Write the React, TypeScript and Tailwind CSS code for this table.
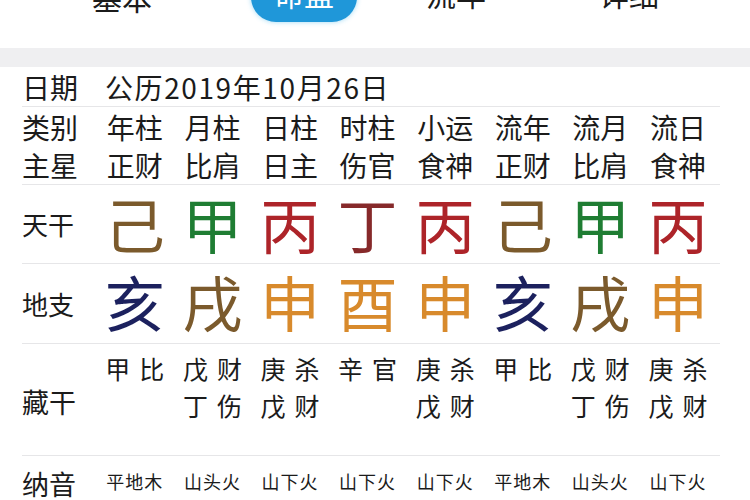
import React from "react";

const font = { fontFamily: '"Noto Sans CJK SC", "Noto Sans", sans-serif' };

const cols = ["年柱", "月柱", "日柱", "时柱", "小运", "流年", "流月", "流日"];
const stars = ["正财", "比肩", "日主", "伤官", "食神", "正财", "比肩", "食神"];
const gan: [string, string][] = [
  ["己", "#7b5a2c"],
  ["甲", "#1f7d33"],
  ["丙", "#ad2429"],
  ["丁", "#86292a"],
  ["丙", "#ad2429"],
  ["己", "#7b5a2c"],
  ["甲", "#1f7d33"],
  ["丙", "#ad2429"],
];
const zhi: [string, string][] = [
  ["亥", "#1c215e"],
  ["戌", "#7b5a2c"],
  ["申", "#d88a2c"],
  ["酉", "#d88a2c"],
  ["申", "#d88a2c"],
  ["亥", "#1c215e"],
  ["戌", "#7b5a2c"],
  ["申", "#d88a2c"],
];
const cang: string[][] = [
  ["甲比"],
  ["戊财", "丁伤"],
  ["庚杀", "戊财"],
  ["辛官"],
  ["庚杀", "戊财"],
  ["甲比"],
  ["戊财", "丁伤"],
  ["庚杀", "戊财"],
];
const nayin = ["平地木", "山头火", "山下火", "山下火", "山下火", "平地木", "山头火", "山下火"];

const grid = "grid grid-cols-[96px_repeat(8,77.6px)] items-center";

function Line() {
  return <div className="h-px bg-[#e6e6e8] ml-[22px] mr-[30px]" />;
}

export default function App() {
  return (
    <div className="w-[750px] h-[500px] overflow-hidden bg-white text-[#1b1b1b]" style={font}>
      {/* tabs */}
      <div className="h-[48px] overflow-hidden">
        <div className="flex items-center -mt-[28px] h-[50px] text-[30px] leading-none">
          <div className="ml-[92px]">基本</div>
          <div className="ml-[99px] h-[50px] w-[106px] rounded-full bg-[#1f97d9] text-white flex items-start pt-[6px] justify-center shadow-[0_0_5px_rgba(40,170,230,0.45)]">
            命盘
          </div>
          <div className="ml-[69px] self-start pt-[6px]">流年</div>
          <div className="ml-[113px] self-start pt-[6px]">详细</div>
        </div>
      </div>
      {/* band */}
      <div className="h-[19px] bg-[#efeff1]" />
      {/* date */}
      <div className={`${grid} h-[39px] text-[28px] leading-none`}>
        <div className="pl-[22px]">日期</div>
        <div className="col-span-8 pl-[9px] tracking-[1.6px]">公历2019年10月26日</div>
      </div>
      <Line />
      <div className={`${grid} h-[39px] text-[28px] leading-none`}>
        <div className="pl-[22px]">类别</div>
        {cols.map((c, i) => (
          <div key={i} className="text-center">{c}</div>
        ))}
      </div>
      <div className={`${grid} h-[38px] text-[28px] leading-none`}>
        <div className="pl-[22px]">主星</div>
        {stars.map((c, i) => (
          <div key={i} className="text-center">{c}</div>
        ))}
      </div>
      <Line />
      <div className={`${grid} h-[78px] leading-none`}>
        <div className="pl-[22px] text-[26px]">天干</div>
        {gan.map(([c, color], i) => (
          <div key={i} className="text-center text-[60px] -mt-[3px]" style={{ color }}>
            {c}
          </div>
        ))}
      </div>
      <Line />
      <div className={`${grid} h-[79px] leading-none`}>
        <div className="pl-[22px] text-[26px]">地支</div>
        {zhi.map(([c, color], i) => (
          <div key={i} className="text-center text-[60px] -mt-[5px]" style={{ color }}>
            {c}
          </div>
        ))}
      </div>
      <Line />
      <div className={`${grid} h-[111px]`}>
        <div className="pl-[22px] text-[27px] leading-none mt-[4px]">藏干</div>
        {cang.map((lines, i) => (
          <div key={i} className="self-start pt-[6px] flex flex-col items-center text-[25px] leading-[37px]">
            {lines.map((l, j) => (
              <div key={j} className="tracking-[9px] pl-[9px]">{l}</div>
            ))}
          </div>
        ))}
      </div>
      <Line />
      <div className={`${grid} h-[50px] leading-none`}>
        <div className="pl-[22px] text-[27px] mt-[4px]">纳音</div>
        {nayin.map((c, i) => (
          <div key={i} className="text-center text-[18px] tracking-[1px]">{c}</div>
        ))}
      </div>
    </div>
  );
}
